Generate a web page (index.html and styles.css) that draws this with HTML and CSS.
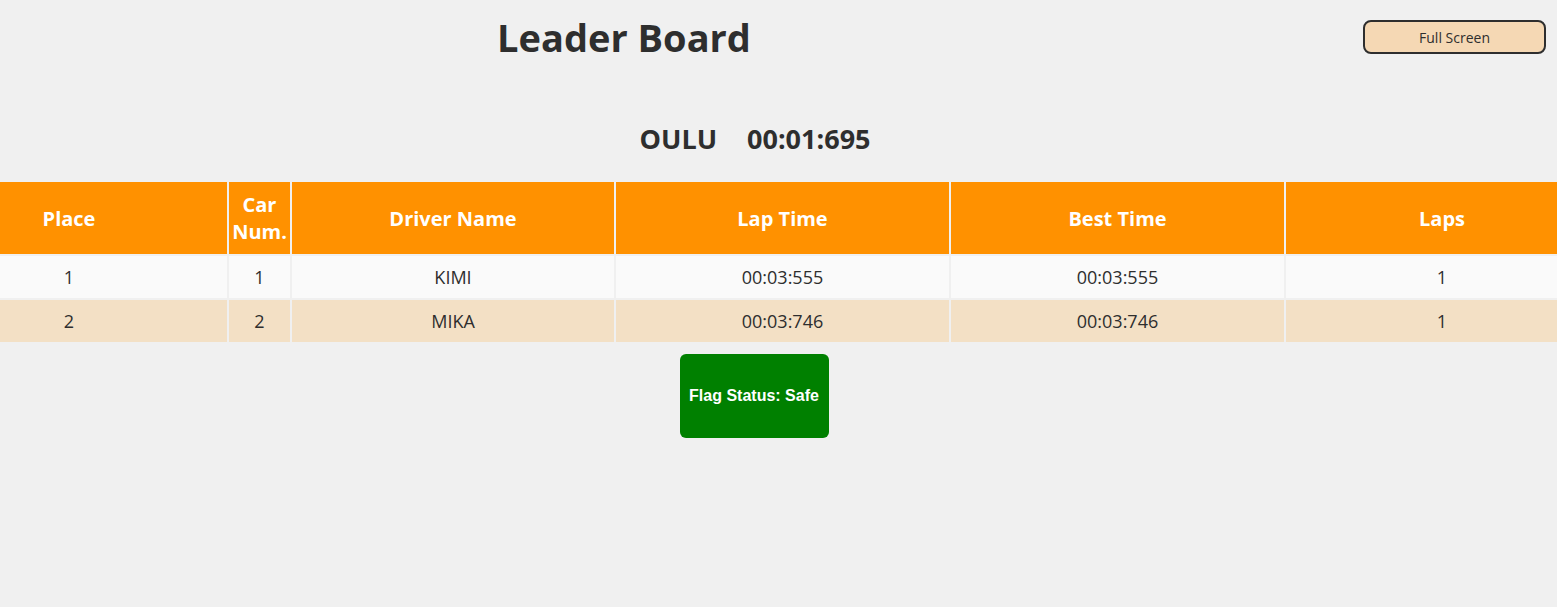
FILE: index.html
```
<!DOCTYPE html>
<html>
<head>
<meta charset="utf-8">
<link rel="stylesheet" href="styles.css">
</head>
<body>
<header class="top">
  <h1 class="title">Leader Board</h1>
  <button class="fs-btn">Full Screen</button>
</header>
<div class="race">
  <span>OULU</span>
  <span>00:01:695</span>
</div>
<div class="table-wrap">
<table class="board">
  <colgroup>
    <col class="c-place"><col class="c-car"><col class="c-driver"><col class="c-lap"><col class="c-best"><col class="c-laps">
  </colgroup>
  <thead>
    <tr><th class="place">Place</th><th>Car Num.</th><th>Driver Name</th><th>Lap Time</th><th>Best Time</th><th class="laps">Laps</th></tr>
  </thead>
  <tbody>
    <tr><td class="place">1</td><td>1</td><td>KIMI</td><td>00:03:555</td><td>00:03:555</td><td class="laps">1</td></tr>
    <tr class="alt"><td class="place">2</td><td>2</td><td>MIKA</td><td>00:03:746</td><td>00:03:746</td><td class="laps">1</td></tr>
  </tbody>
</table>
</div>
<div class="flag-row">
  <div class="flag">Flag Status: Safe</div>
</div>
</body>
</html>
```
FILE: styles.css
```
html, body {
  margin: 0;
  padding: 0;
  background: #f0f0f0;
  font-family: "Open Sans", "Noto Sans", sans-serif;
  color: #2e2e2e;
}
.top {
  display: flex;
  align-items: flex-start;
  padding-top: 11px;
  height: 109px;
}
.title {
  width: 1248px;
  margin: 0;
  text-align: center;
  font-size: 38px;
  font-weight: 700;
  line-height: 52px;
  color: #2e2e2e;
}
.fs-btn {
  margin-left: auto;
  margin-right: 11px;
  margin-top: 9px;
  width: 183px;
  height: 34px;
  background: #f5d8b4;
  border: 2px solid #2e2e2e;
  border-radius: 8px;
  font-family: "Open Sans", "Noto Sans", sans-serif;
  font-size: 14px;
  color: #2e2e2e;
  padding: 0;
}
.race {
  display: flex;
  justify-content: center;
  gap: 30px;
  width: 1510px;
  font-size: 27px;
  font-weight: 700;
  line-height: 37px;
}
.table-wrap {
  overflow: hidden;
  margin-top: 23px;
}
.board {
  table-layout: fixed;
  border-spacing: 2px;
  margin: 0 -2px;
  width: calc(100% + 4px);
}
.c-place { width: 227px; }
.c-car { width: 61px; }
.c-driver { width: 322px; }
.c-lap { width: 333px; }
.c-best { width: 333px; }
.c-laps { width: 271px; }
.board th {
  background: #ff9100;
  color: #fff;
  font-size: 20px;
  font-weight: 700;
  line-height: 27px;
  height: 72px;
  padding: 0;
  text-align: center;
}
.board td {
  background: #fafafa;
  font-size: 18px;
  line-height: 24px;
  height: 42px;
  padding: 0;
  text-align: center;
  color: #2e2e2e;
}
.board tr.alt td {
  background: #f3e0c5;
}
.board .place { padding-right: 89px; }
.board .laps { padding-left: 41px; }
.flag-row {
  display: flex;
  justify-content: center;
  width: 1508px;
  margin-top: 10px;
}
.flag {
  background: #008000;
  color: #fff;
  font-family: "Liberation Sans", Arial, sans-serif;
  font-weight: 700;
  font-size: 16px;
  width: 149px;
  height: 84px;
  border-radius: 6px;
  display: flex;
  align-items: center;
  justify-content: center;
}
```
